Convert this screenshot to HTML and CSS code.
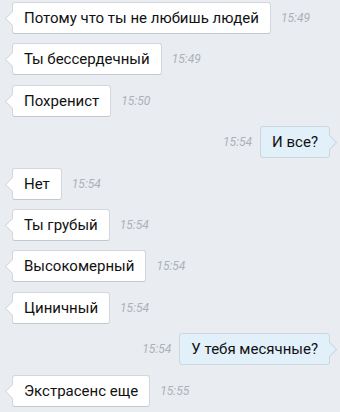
FILE: index.html
```html
<!DOCTYPE html>
<html>
<head>
  <link rel="stylesheet" href="styles.css">
</head>
<body>
  <div class="chat">
    <div class="row in">
      <div class="bubble">Потому что ты не любишь людей</div>
      <span class="time">15:49</span>
    </div>
    <div class="row in">
      <div class="bubble">Ты бессердечный</div>
      <span class="time">15:49</span>
    </div>
    <div class="row in">
      <div class="bubble">Похренист</div>
      <span class="time">15:50</span>
    </div>
    <div class="row out">
      <span class="time">15:54</span>
      <div class="bubble">И все?</div>
    </div>
    <div class="row in">
      <div class="bubble">Нет</div>
      <span class="time">15:54</span>
    </div>
    <div class="row in">
      <div class="bubble">Ты грубый</div>
      <span class="time">15:54</span>
    </div>
    <div class="row in">
      <div class="bubble">Высокомерный</div>
      <span class="time">15:54</span>
    </div>
    <div class="row in">
      <div class="bubble">Циничный</div>
      <span class="time">15:54</span>
    </div>
    <div class="row out">
      <span class="time">15:54</span>
      <div class="bubble">У тебя месячные?</div>
    </div>
    <div class="row in">
      <div class="bubble">Экстрасенс еще</div>
      <span class="time">15:55</span>
    </div>
  </div>
</body>
</html>
```

FILE: styles.css
```css
* {
  margin: 0;
  padding: 0;
  box-sizing: border-box;
  font-family: 'Roboto', 'Liberation Sans', sans-serif;
}

body {
  background: #e9ecf1;
  overflow: hidden;
}

.chat {
  display: flex;
  flex-direction: column;
  gap: 9.4px;
  padding: 2px 10px 0 12px;
}

.row {
  display: flex;
  align-items: center;
  gap: 10px;
}

.row.out {
  justify-content: flex-end;
  gap: 8px;
}

.bubble {
  position: relative;
  height: 32px;
  line-height: 30px;
  padding: 0 11px;
  font-size: 15px;
  color: #111;
  background: #fff;
  border: 1px solid #d3d7dd;
  border-bottom-color: #c3c8cf;
  border-radius: 3px;
  white-space: nowrap;
}

.bubble::before {
  content: '';
  position: absolute;
  top: 10px;
  width: 10px;
  height: 10px;
  background: inherit;
  transform: rotate(45deg);
}

.in .bubble::before {
  left: -6px;
  border-left: 1px solid #d3d7dd;
  border-bottom: 1px solid #d3d7dd;
}

.out .bubble {
  background: #e2f0fa;
  border-color: #ccd6df;
}

.out .bubble::before {
  right: -6px;
  border-right: 1px solid #ccd6df;
  border-top: 1px solid #ccd6df;
}

.time {
  font-size: 12px;
  font-style: italic;
  color: #adb1b7;
}
```
